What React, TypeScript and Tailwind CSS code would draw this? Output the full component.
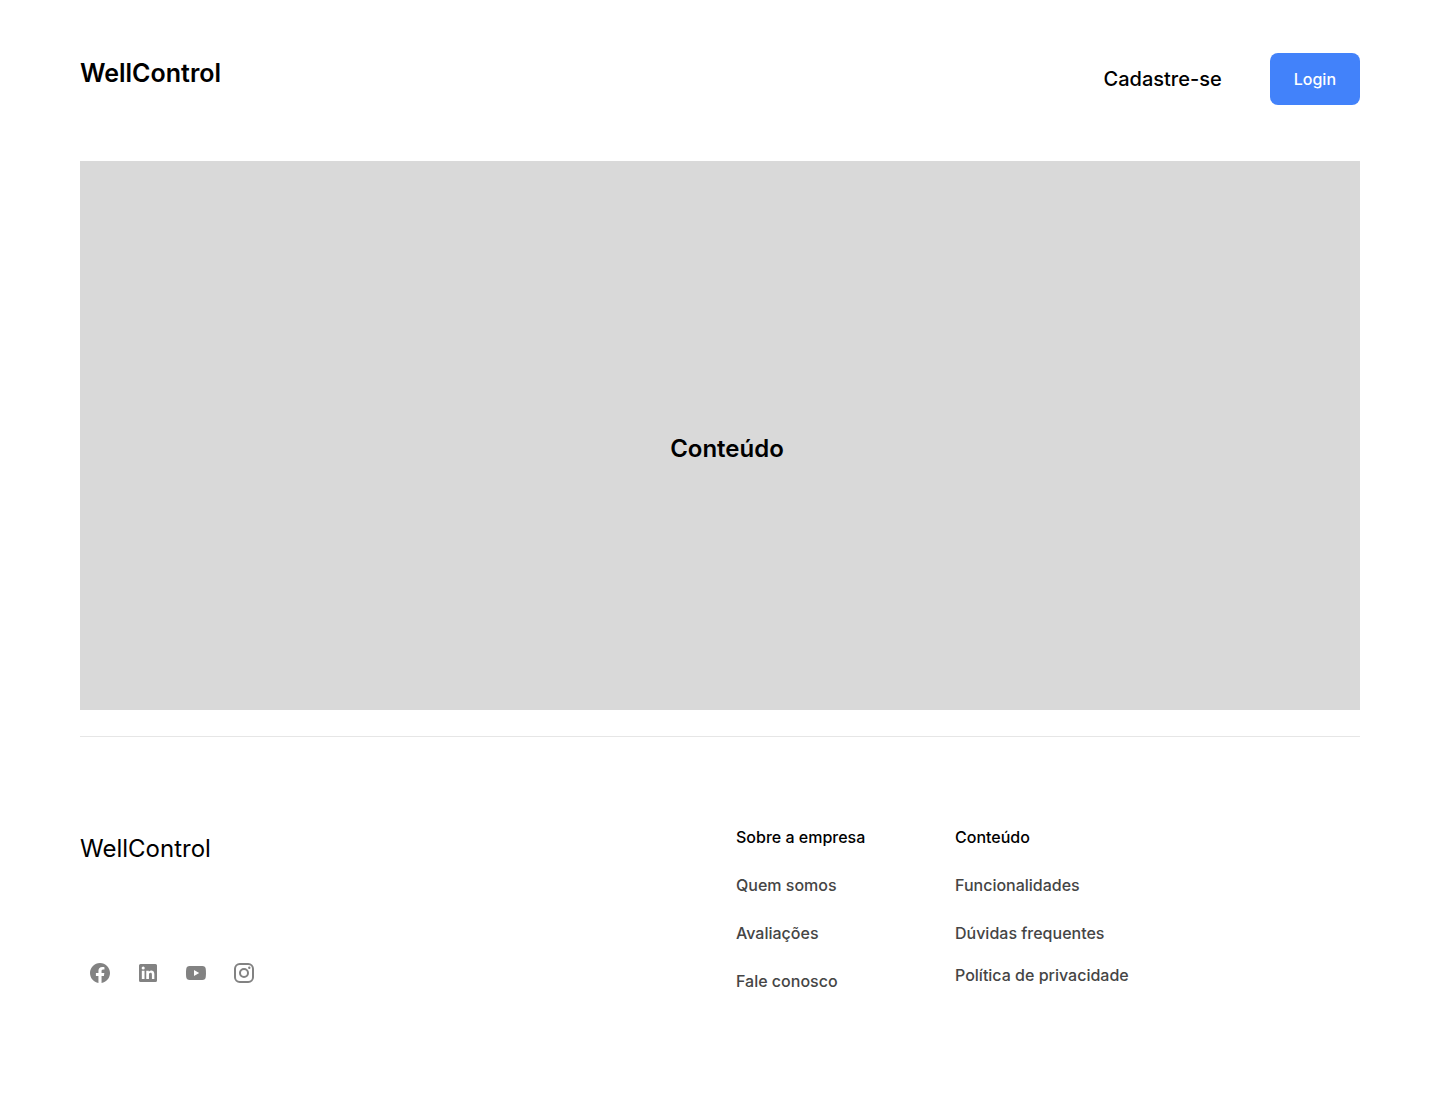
import React from "react";

function Icon({ label, d }: { label: string; d: string }) {
  return (
    <a href="#" aria-label={label} className="flex size-10 items-center justify-center text-[#828282]">
      <svg viewBox="0 0 24 24" className="size-6" fill="currentColor" fillRule="evenodd" aria-hidden="true">
        <path d={d} />
      </svg>
    </a>
  );
}

const icons = [
  { label: "Facebook", d: "M22 12.06C22 6.5 17.52 2 12 2S2 6.5 2 12.06c0 5.02 3.66 9.18 8.44 9.94v-7.03H7.9v-2.91h2.54V9.85c0-2.52 1.49-3.91 3.77-3.91 1.1 0 2.24.2 2.24.2v2.47h-1.26c-1.24 0-1.63.78-1.63 1.57v1.88h2.78l-.45 2.91h-2.33V22C18.34 21.24 22 17.08 22 12.06Z" },
  { label: "LinkedIn", d: "M4.5 3h15A1.5 1.5 0 0 1 21 4.5v15a1.5 1.5 0 0 1-1.5 1.5h-15A1.5 1.5 0 0 1 3 19.500v-15A1.500 1.500 0 0 1 4.500 3ZM8.520 18v-8.250H5.820V18h2.700ZM7.190 8.580a1.560 1.560 0 1 0 0-3.120 1.560 1.560 0 0 0 0 3.120ZM18.340 18v-5.070c0-2.260-1.440-3.390-3.120-3.390-1.700 0-2.430 1.320-2.430 1.320V9.750h-2.540V18h2.700v-4.330c0-1.160.53-1.850 1.560-1.850.94 0 1.400.67 1.400 1.850V18h2.430Z" },
  { label: "YouTube", d: "M21.600 7.200c-.23-1.020-.95-1.740-1.900-1.920C18.200 5 15 5 12 5s-6.200 0-7.700.28c-.95.18-1.670.9-1.900 1.920C2 8.700 2 12 2 12s0 3.300.4 4.800c.23 1.020.95 1.740 1.900 1.920C5.800 19 9 19 12 19s6.200 0 7.700-.28c.95-.18 1.670-.9 1.900-1.920.4-1.500.4-4.800.4-4.800s0-3.300-.4-4.800ZM10 15V9l5.200 3-5.200 3Z" },
  { label: "Instagram", d: "M7.800 2h8.400A5.800 5.800 0 0 1 22 7.800v8.400a5.800 5.800 0 0 1-5.800 5.800H7.800A5.800 5.800 0 0 1 2 16.200V7.800A5.800 5.800 0 0 1 7.800 2Zm0 2A3.800 3.800 0 0 0 4 7.800v8.400A3.800 3.800 0 0 0 7.800 20h8.400a3.800 3.800 0 0 0 3.800-3.800V7.800A3.800 3.800 0 0 0 16.200 4H7.800ZM12 7a5 5 0 1 1 0 10 5 5 0 0 1 0-10Zm0 2a3 3 0 1 0 0 6 3 3 0 0 0 0-6Zm5.300-3.500a1.200 1.200 0 1 1 0 2.400 1.200 1.200 0 0 1 0-2.400Z" },
];

export default function App() {
  return (
    <div className="bg-white pr-[78px] pl-20 font-['Inter',sans-serif] font-medium text-black">
      <header className="flex items-start justify-between pt-[53px]">
        <h1 className="pt-1 text-[25px] leading-8 font-semibold">WellControl</h1>
        <nav className="flex items-center gap-12">
          <a href="#" className="text-xl">Cadastre-se</a>
          <button type="button" className="rounded-lg bg-[#4282fa] px-6 py-3.5 text-base text-white">Login</button>
        </nav>
      </header>
      <main className="mt-14 flex h-[549px] items-center justify-center bg-[#d9d9d9] pt-[26px] pl-[14px]">
        <h2 className="text-2xl font-semibold">Conteúdo</h2>
      </main>
      <footer className="mt-[26px] flex border-t border-[#e6e6e6] pt-[88px] pb-28">
        <div className="flex-1">
          <p className="pt-1.5 text-2xl leading-9 font-normal">WellControl</p>
          <div className="mt-[86px] flex gap-2">
            {icons.map((i) => <Icon key={i.label} {...i} />)}
          </div>
        </div>
        <div className="flex w-[624px] gap-8 text-base text-[#454545]">
          <div className="flex w-[187px] flex-col gap-6">
            <h3 className="text-black">Sobre a empresa</h3>
            <a href="#">Quem somos</a>
            <a href="#">Avaliações</a>
            <a href="#">Fale conosco</a>
          </div>
          <div className="flex flex-col gap-6">
            <h3 className="text-black">Conteúdo</h3>
            <a href="#">Funcionalidades</a>
            <a href="#">Dúvidas frequentes</a>
            <a href="#" className="-mt-1.5">Política de privacidade</a>
          </div>
        </div>
      </footer>
    </div>
  );
}
